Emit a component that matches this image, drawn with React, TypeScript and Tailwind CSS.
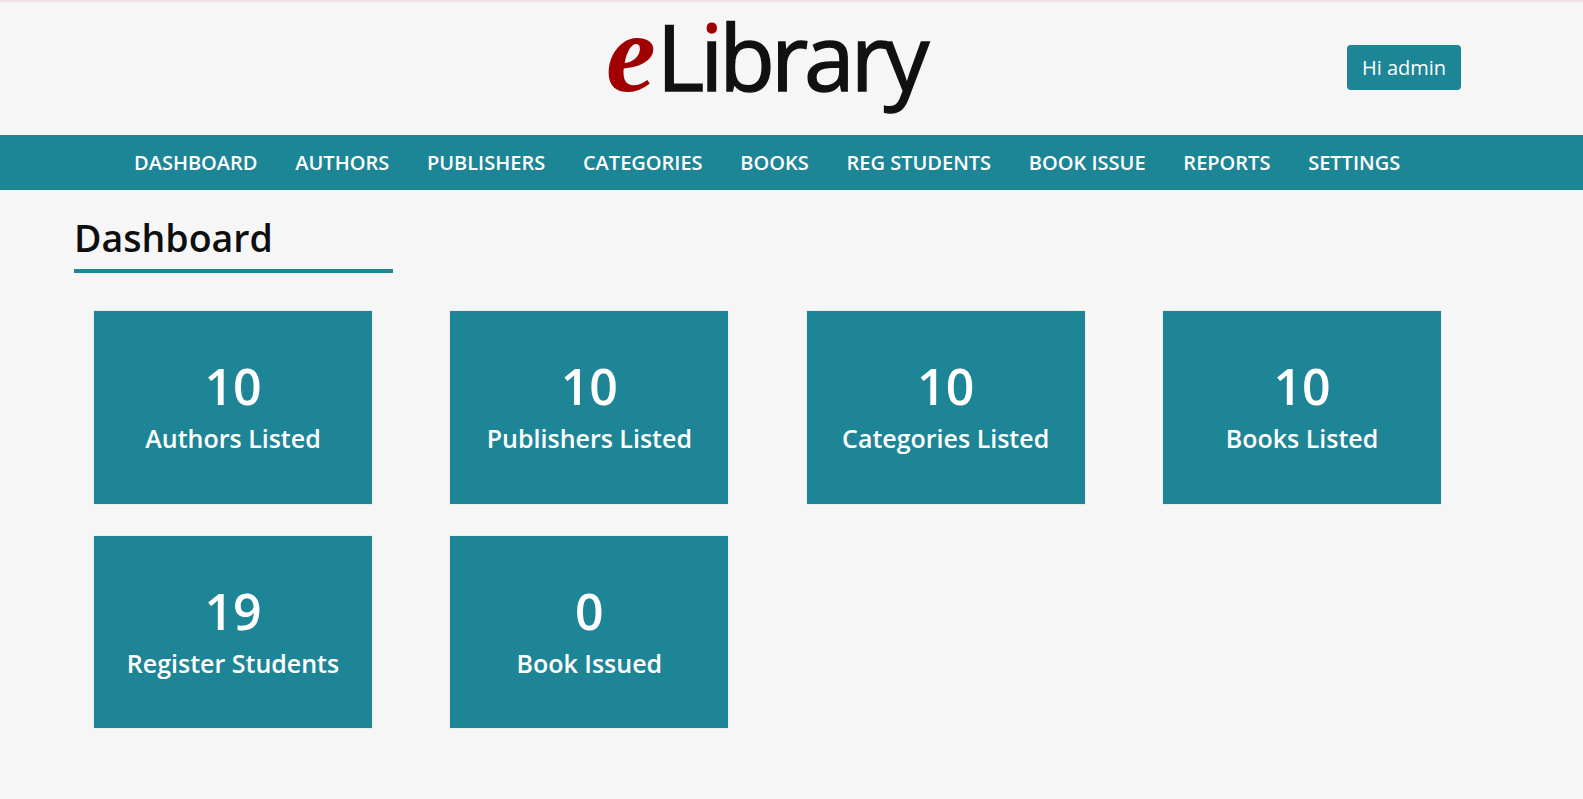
import React from 'react';

const NAV = ['DASHBOARD', 'AUTHORS', 'PUBLISHERS', 'CATEGORIES', 'BOOKS', 'REG STUDENTS', 'BOOK ISSUE', 'REPORTS', 'SETTINGS'];

const STATS = [
  { value: '10', label: 'Authors Listed' },
  { value: '10', label: 'Publishers Listed' },
  { value: '10', label: 'Categories Listed' },
  { value: '10', label: 'Books Listed' },
  { value: '19', label: 'Register Students' },
  { value: '0', label: 'Book Issued' },
];

const App: React.FC = () => {
  return (
    <div className="min-h-[799px] bg-[#f6f6f6] font-['Open_Sans',sans-serif] text-[#0e0e0e]">
      <div className="h-[2px] bg-[#f3dfe9]"></div>

      {/* Header */}
      <header className="flex h-[133px] items-start pl-[606px] pr-[122px]">
        <div className="mt-[1px] flex items-baseline whitespace-nowrap leading-[100px] antialiased">
          <span className="font-['Liberation_Serif',serif] text-[112px] font-bold italic text-[#a00000]">e</span>
          <span className="ml-[1px] text-[91px] font-medium tracking-[-4px] text-[#111111] [-webkit-text-stroke:1.5px_#111111]">
            L
            <span className="bg-[linear-gradient(#a00000_0,#a00000_45px,#111111_45px)] bg-clip-text text-transparent [-webkit-text-stroke:1.5px_transparent]">i</span>
            brary
          </span>
        </div>
        <button className="ml-auto mt-[43px] h-[45px] w-[114px] rounded-[4px] bg-[#1c8596] text-[20px] text-white">
          Hi admin
        </button>
      </header>

      {/* Nav */}
      <nav className="flex h-[55px] items-center gap-[37.75px] bg-[#1c8596] pl-[134px]">
        {NAV.map((item) => (
          <a key={item} className="text-[20px] font-semibold text-white">
            {item}
          </a>
        ))}
      </nav>

      <main className="pl-[74px] pt-[24px]">
        <div className="w-[319px] border-b-4 border-[#1c8596] pb-[8px]">
          <h1 className="text-[37.5px] leading-[47px] font-semibold">Dashboard</h1>
        </div>

        <div className="ml-[20px] mt-[38px] grid grid-cols-[repeat(4,278px)] grid-rows-[193px_192px] gap-x-[78.33px] gap-y-[32px]">
          {STATS.map((stat) => (
            <div key={stat.label} className="flex flex-col items-center bg-[#1d8596] pt-[40px] text-white shadow-[0_0_1px_#bbbbbb]">
              <div className="text-[50px] leading-[70px] font-semibold">{stat.value}</div>
              <div className="text-[25px] leading-[35px] font-semibold">{stat.label}</div>
            </div>
          ))}
        </div>
      </main>
    </div>
  );
};

export default App;
